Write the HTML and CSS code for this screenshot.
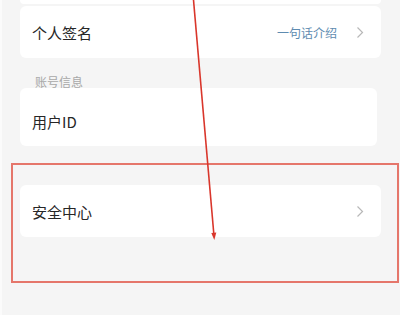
FILE: index.html
```html
<!DOCTYPE html>
<html lang="zh-CN">
<head>
<meta charset="utf-8">
<link rel="stylesheet" href="styles.css">
</head>
<body>
<div class="page">
  <div class="list">
    <div class="card card-stub"></div>
    <div class="card row">
      <span class="title">个人签名</span>
      <span class="value">一句话介绍</span>
      <svg class="chev" width="8" height="13" viewBox="0 0 8 13"><path d="M1.5 1.5 L6.5 6.5 L1.5 11.5" fill="none" stroke="#b8b8b8" stroke-width="1.2"/></svg>
    </div>
    <div class="section-label">账号信息</div>
    <div class="card row row-id">
      <span class="title">用户ID</span>
    </div>
    <div class="card row row-safe">
      <span class="title">安全中心</span>
      <svg class="chev" width="8" height="13" viewBox="0 0 8 13"><path d="M1.5 1.5 L6.5 6.5 L1.5 11.5" fill="none" stroke="#b8b8b8" stroke-width="1.2"/></svg>
    </div>
  </div>
  <div class="highlight"></div>
  <svg class="arrow" width="400" height="315" viewBox="0 0 400 315">
    <line x1="193.5" y1="0" x2="214" y2="236" stroke="#d9362b" stroke-width="1.6"/>
    <path d="M211.3 233 L214.3 240 L216.3 232.6 Z" fill="#d9362b"/>
  </svg>
</div>
</body>
</html>
```
FILE: styles.css
```css
html, body {
  margin: 0;
  padding: 0;
}
body {
  background: #f5f5f5;
  font-family: "Noto Sans CJK SC", "Noto Sans", sans-serif;
  width: 400px;
  height: 315px;
  overflow: hidden;
}
.page {
  position: relative;
  width: 400px;
  height: 315px;
  background: #f5f5f5;
  border-left: 2px solid #fbfbfb;
  box-sizing: border-box;
}
.list {
  display: flex;
  flex-direction: column;
  padding-left: 18px;
  width: 361px;
}
.card {
  background: #ffffff;
  border-radius: 6px;
}
.card-stub {
  height: 4px;
  border-radius: 0 0 6px 6px;
  margin-bottom: 2px;
}
.row {
  display: flex;
  align-items: center;
  height: 52px;
  padding: 0 17px 0 12px;
}
.title {
  font-size: 15px;
  color: #262626;
  flex: 1;
}
.value {
  font-size: 12px;
  color: #5e8bb0;
  margin-right: 19px;
}
.chev {
  display: block;
}
.section-label {
  font-size: 12px;
  color: #a8a8a8;
  padding: 16px 0 0 15px;
  height: 16px;
  line-height: 16px;
  margin-bottom: -2px;
  box-sizing: content-box;
}
.row-id {
  height: 58px;
  align-items: flex-start;
  padding-top: 23px;
  box-sizing: border-box;
  width: 357px;
}
.row-safe {
  margin-top: 39px;
}
.highlight {
  position: absolute;
  left: 9px;
  top: 163px;
  width: 384px;
  height: 116px;
  border: 2px solid #e5766b;
}
.arrow {
  position: absolute;
  left: -2px;
  top: 0;
}
```
